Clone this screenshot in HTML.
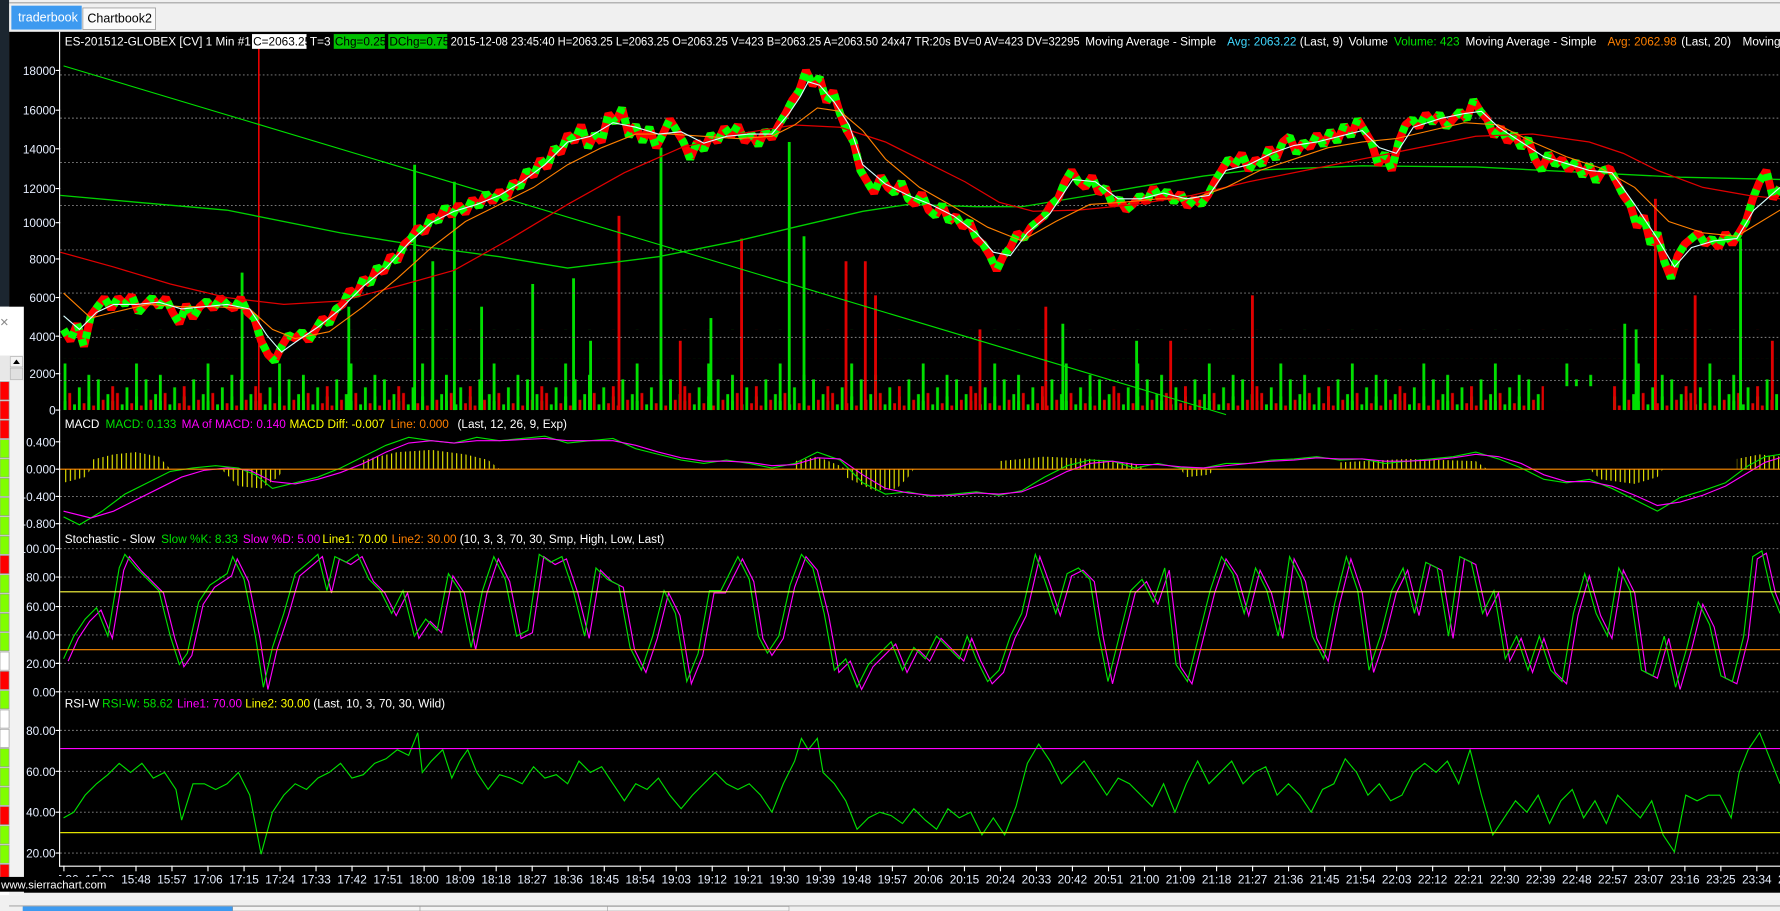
<!DOCTYPE html>
<html><head><meta charset="utf-8">
<style>
html,body{margin:0;padding:0;background:#000;overflow:hidden}
svg{display:block}
text{font-family:"Liberation Sans",sans-serif;font-size:10.4px}
.ax{fill:#e6eeff;text-anchor:end}
.tl{fill:#e6eeff;text-anchor:middle}
.w{fill:#fff}
</style></head><body>
<svg width="1780" height="911" viewBox="0 0 1568 802" preserveAspectRatio="none" xmlns="http://www.w3.org/2000/svg">
<defs>
<clipPath id="pc"><rect x="53" y="28" width="1515" height="734"/></clipPath>
<clipPath id="tc"><rect x="52" y="762" width="1516" height="24"/></clipPath>
<pattern id="vol" patternUnits="userSpaceOnUse" x="56" y="316" width="42" height="45">
<rect x="0" y="37" width="2.5" height="8" fill="#00e000"/><rect x="4.2" y="30" width="2.5" height="15" fill="#e00000"/><rect x="8.4" y="40" width="2.5" height="5" fill="#00e000"/><rect x="12.6" y="25" width="2.5" height="20" fill="#00e000"/><rect x="16.8" y="39" width="2.5" height="6" fill="#e00000"/><rect x="21" y="33" width="2.5" height="12" fill="#00e000"/><rect x="25.2" y="41" width="2.5" height="4" fill="#e00000"/><rect x="29.4" y="18" width="2.5" height="27" fill="#00e000"/><rect x="33.6" y="36" width="2.5" height="9" fill="#e00000"/><rect x="37.8" y="31" width="2.5" height="14" fill="#00e000"/>
</pattern>
<pattern id="vol2" patternUnits="userSpaceOnUse" x="77" y="290" width="63" height="71">
<rect x="0" y="40" width="2.5" height="31" fill="#00e000"/><rect x="21" y="50" width="2.5" height="21" fill="#e00000"/><rect x="42" y="30" width="2.5" height="41" fill="#00e000"/>
</pattern>
<pattern id="hist" patternUnits="userSpaceOnUse" x="0" y="0" width="4.1" height="10"><rect x="0" y="0" width="1" height="10" fill="#e8e800"/></pattern>
</defs>
<rect x="0" y="0" width="1568" height="802" fill="#f0f0f0"/>
<rect x="0" y="0" width="8" height="270" fill="#1c2630"/>
<line x1="8" y1="2.5" x2="1568" y2="2.5" stroke="#a0a0a0"/>
<rect x="10" y="5" width="62" height="21" fill="#3d9af0"/>
<text x="16" y="19" fill="#fff" style="font-size:11px">traderbook</text>
<rect x="73" y="7" width="64" height="19" fill="#fafafa" stroke="#999" stroke-width="0.7"/>
<text x="77" y="20" fill="#000" style="font-size:11px">Chartbook2</text>
<rect x="8" y="28" width="1560" height="758" fill="#000"/>
<rect x="8" y="786" width="1560" height="16" fill="#f0f0f0"/>
<line x1="8" y1="797.5" x2="1568" y2="797.5" stroke="#aaa"/>
<rect x="20" y="798" width="185" height="4" fill="#3d9af0"/>
<rect x="205" y="798" width="165" height="4" fill="#f5f5f5" stroke="#999" stroke-width="0.5"/>
<rect x="370" y="798" width="165" height="4" fill="#f5f5f5" stroke="#999" stroke-width="0.5"/>
<rect x="535" y="798" width="160" height="4" fill="#f5f5f5" stroke="#999" stroke-width="0.5"/>
<g clip-path="url(#pc)">
<rect x="56" y="316" width="1512" height="45" fill="url(#vol)"/>
<rect x="56" y="290" width="1512" height="71" fill="url(#vol2)"/>
<g fill="#00e000">
<rect x="364" y="145" width="2.5" height="216"/><rect x="399" y="160" width="2.5" height="201"/><rect x="581" y="130" width="2.5" height="231"/><rect x="694" y="125" width="2.5" height="236"/><rect x="707" y="208" width="2.5" height="153"/><rect x="1532" y="210" width="2.5" height="151"/><rect x="423" y="270" width="2.5" height="91"/><rect x="504" y="245" width="2.5" height="116"/><rect x="519" y="300" width="2.5" height="61"/><rect x="1440" y="290" width="2.5" height="71"/><rect x="306" y="270" width="2.5" height="91"/><rect x="380" y="230" width="2.5" height="131"/><rect x="625" y="280" width="2.5" height="81"/><rect x="935" y="285" width="2.5" height="76"/><rect x="1000" y="300" width="2.5" height="61"/><rect x="1430" y="285" width="2.5" height="76"/><rect x="468" y="250" width="2.5" height="111"/><rect x="212" y="240" width="2.5" height="121"/>
</g>
<g fill="#e00000">
<rect x="544" y="190" width="2.5" height="171"/><rect x="652" y="210" width="2.5" height="151"/><rect x="744" y="230" width="2.5" height="131"/><rect x="761" y="230" width="2.5" height="131"/><rect x="1102" y="260" width="2.5" height="101"/><rect x="1457" y="175" width="2.5" height="186"/><rect x="1492" y="260" width="2.5" height="101"/><rect x="862" y="290" width="2.5" height="71"/><rect x="920" y="270" width="2.5" height="91"/><rect x="1030" y="300" width="2.5" height="61"/><rect x="1560" y="300" width="2.5" height="61"/><rect x="770" y="260" width="2.5" height="101"/><rect x="598" y="300" width="2.5" height="61"/>
</g>
<rect x="1360" y="340" width="60" height="21" fill="#000"/>
</g>
<g stroke="#888" stroke-dasharray="1.5,2" stroke-width="0.8">
<line x1="53" y1="66" x2="1568" y2="66"/><line x1="53" y1="104" x2="1568" y2="104"/><line x1="53" y1="143" x2="1568" y2="143"/><line x1="53" y1="181" x2="1568" y2="181"/><line x1="53" y1="220" x2="1568" y2="220"/><line x1="53" y1="258" x2="1568" y2="258"/><line x1="53" y1="297" x2="1568" y2="297"/><line x1="53" y1="335" x2="1568" y2="335"/>
<line x1="53" y1="437" x2="1568" y2="437"/><line x1="53" y1="461" x2="1568" y2="461"/>
<line x1="53" y1="483" x2="1568" y2="483"/><line x1="53" y1="508" x2="1568" y2="508"/><line x1="53" y1="534" x2="1568" y2="534"/><line x1="53" y1="559" x2="1568" y2="559"/><line x1="53" y1="584" x2="1568" y2="584"/><line x1="53" y1="609" x2="1568" y2="609"/>
<line x1="53" y1="643" x2="1568" y2="643"/><line x1="53" y1="679" x2="1568" y2="679"/><line x1="53" y1="715" x2="1568" y2="715"/><line x1="53" y1="751" x2="1568" y2="751"/>
</g>
<g clip-path="url(#pc)">
<line x1="228" y1="42" x2="228" y2="361" stroke="#ff0000" stroke-width="1.3"/>
<polyline fill="none" stroke="#00d000" stroke-width="1.2" points="53,172 120,178 200,185 300,205 380,218 440,226 500,236 580,226 650,212 700,200 760,186 800,180 860,182 900,182 960,172 1000,165 1060,155 1100,150 1200,146 1300,147 1400,152 1480,156 1568,158"/>
<line x1="56" y1="58" x2="1080" y2="365" stroke="#00e000"/>
<g fill="none" stroke-linejoin="bevel">
<polyline stroke="#ff0000" stroke-width="7" points="56,290 62,300 68,285 74,305 80,278 86,270 92,262 98,272 104,262 110,268 116,260 122,275 128,268 134,262 140,270 146,262 152,275 158,285 164,268 170,280 176,270 182,265 188,272 194,262 200,268 206,272 212,262 218,275 224,280 230,300 236,312 242,318 248,305 254,295 260,298 266,292 272,300 278,290 284,280 290,285 296,272 302,268 308,255 314,260 320,245 326,250 332,235 338,240 344,225 350,230 356,215 362,210 368,200 374,205 380,190 386,195 392,182 398,190 404,180 410,188 416,175 422,182 428,170 434,178 440,168 446,175 452,160 458,165 464,150 470,155 476,140 482,148 488,130 494,135 500,118 506,125 512,110 518,130 524,118 530,125 536,100 542,108 548,95 554,120 560,110 566,125 572,112 578,130 584,118 590,105 596,115 602,125 608,140 614,125 620,132 626,118 632,125 638,112 644,120 650,110 656,125 662,118 668,128 674,115 680,122 686,110 692,100 698,88 704,80 710,62 716,75 722,68 728,90 734,80 740,100 746,115 752,125 758,150 764,160 770,170 776,155 782,165 788,170 794,160 800,175 806,180 812,170 818,185 824,190 830,180 836,195 842,190 848,200 854,195 860,210 866,215 872,225 878,238 884,225 890,218 896,205 902,210 908,200 914,195 920,190 926,180 932,175 938,160 944,150 950,160 956,165 962,155 968,170 974,165 980,180 986,175 992,185 998,180 1004,172 1010,178 1016,165 1022,175 1028,168 1034,178 1040,170 1046,182 1052,175 1058,180 1064,172 1070,160 1076,150 1082,140 1088,145 1094,135 1100,150 1106,140 1112,145 1118,130 1124,140 1130,125 1136,120 1142,135 1148,125 1154,130 1160,118 1166,128 1172,115 1178,125 1184,110 1190,120 1196,105 1202,115 1208,125 1214,145 1220,135 1226,150 1232,125 1238,110 1244,105 1250,112 1256,100 1262,108 1268,100 1274,112 1280,105 1286,98 1292,105 1298,88 1304,98 1310,105 1316,120 1322,112 1328,125 1334,118 1340,130 1346,122 1352,140 1358,150 1364,135 1370,145 1376,140 1382,150 1388,142 1394,155 1400,145 1406,160 1412,150 1418,148 1424,160 1430,172 1436,180 1442,200 1448,190 1454,215 1460,205 1466,230 1472,245 1478,225 1484,215 1490,210 1496,205 1502,215 1508,210 1514,218 1520,205 1526,215 1532,205 1538,195 1544,175 1550,160 1556,150 1562,175 1568,165"/>
<polyline stroke="#00ff00" stroke-width="7" stroke-dasharray="6,8" points="56,290 62,300 68,285 74,305 80,278 86,270 92,262 98,272 104,262 110,268 116,260 122,275 128,268 134,262 140,270 146,262 152,275 158,285 164,268 170,280 176,270 182,265 188,272 194,262 200,268 206,272 212,262 218,275 224,280 230,300 236,312 242,318 248,305 254,295 260,298 266,292 272,300 278,290 284,280 290,285 296,272 302,268 308,255 314,260 320,245 326,250 332,235 338,240 344,225 350,230 356,215 362,210 368,200 374,205 380,190 386,195 392,182 398,190 404,180 410,188 416,175 422,182 428,170 434,178 440,168 446,175 452,160 458,165 464,150 470,155 476,140 482,148 488,130 494,135 500,118 506,125 512,110 518,130 524,118 530,125 536,100 542,108 548,95 554,120 560,110 566,125 572,112 578,130 584,118 590,105 596,115 602,125 608,140 614,125 620,132 626,118 632,125 638,112 644,120 650,110 656,125 662,118 668,128 674,115 680,122 686,110 692,100 698,88 704,80 710,62 716,75 722,68 728,90 734,80 740,100 746,115 752,125 758,150 764,160 770,170 776,155 782,165 788,170 794,160 800,175 806,180 812,170 818,185 824,190 830,180 836,195 842,190 848,200 854,195 860,210 866,215 872,225 878,238 884,225 890,218 896,205 902,210 908,200 914,195 920,190 926,180 932,175 938,160 944,150 950,160 956,165 962,155 968,170 974,165 980,180 986,175 992,185 998,180 1004,172 1010,178 1016,165 1022,175 1028,168 1034,178 1040,170 1046,182 1052,175 1058,180 1064,172 1070,160 1076,150 1082,140 1088,145 1094,135 1100,150 1106,140 1112,145 1118,130 1124,140 1130,125 1136,120 1142,135 1148,125 1154,130 1160,118 1166,128 1172,115 1178,125 1184,110 1190,120 1196,105 1202,115 1208,125 1214,145 1220,135 1226,150 1232,125 1238,110 1244,105 1250,112 1256,100 1262,108 1268,100 1274,112 1280,105 1286,98 1292,105 1298,88 1304,98 1310,105 1316,120 1322,112 1328,125 1334,118 1340,130 1346,122 1352,140 1358,150 1364,135 1370,145 1376,140 1382,150 1388,142 1394,155 1400,145 1406,160 1412,150 1418,148 1424,160 1430,172 1436,180 1442,200 1448,190 1454,215 1460,205 1466,230 1472,245 1478,225 1484,215 1490,210 1496,205 1502,215 1508,210 1514,218 1520,205 1526,215 1532,205 1538,195 1544,175 1550,160 1556,150 1562,175 1568,165"/>
</g>
<polyline fill="none" stroke="#e00000" stroke-width="1.1" points="53,222 100,235 150,250 200,262 250,268 300,265 350,252 400,238 450,210 500,180 550,152 600,130 650,118 700,110 740,112 780,125 820,145 850,160 880,178 910,186 950,185 1000,180 1050,172 1100,160 1150,150 1200,140 1250,130 1300,120 1350,118 1400,125 1430,135 1460,150 1500,165 1540,172 1568,175"/>
<polyline fill="none" stroke="#ff8000" stroke-width="1" points="56,258 80,280 100,275 130,268 160,270 190,270 220,272 240,290 260,298 290,292 320,270 350,245 380,218 410,195 440,180 470,165 500,145 530,130 560,118 590,118 620,120 650,122 680,120 700,110 720,95 740,98 760,115 780,140 810,165 840,182 870,200 900,212 930,195 960,180 990,178 1020,175 1050,175 1080,165 1110,150 1140,140 1170,130 1200,125 1230,122 1260,115 1290,108 1320,110 1350,125 1380,138 1410,148 1440,165 1470,195 1500,205 1530,208 1568,185"/>
<polyline fill="none" stroke="#d8ffff" stroke-width="1" points="56,278 70,290 85,275 100,268 120,268 140,266 160,272 180,270 200,268 220,272 235,295 248,310 262,300 280,288 300,272 320,252 340,236 360,214 380,196 400,186 420,180 440,172 460,160 480,145 500,125 520,120 540,108 560,112 580,118 600,116 620,126 640,120 660,118 680,118 695,100 705,85 712,72 722,75 735,90 748,110 760,145 780,162 800,172 820,180 840,190 860,205 875,222 890,225 905,205 925,188 945,158 965,160 985,175 1005,175 1025,170 1045,175 1065,172 1080,150 1100,145 1120,135 1140,128 1160,125 1180,120 1200,115 1215,130 1230,135 1245,112 1270,104 1290,100 1305,98 1320,112 1340,125 1360,138 1380,144 1400,150 1420,152 1440,180 1460,210 1475,235 1490,218 1510,212 1530,210 1545,185 1568,165"/>
<path fill="url(#hist)" d="M56 413 L56 425 L75 420 L80 413 L80 405 L100 400 L120 398 L140 402 L150 413 L195 413 L210 428 L230 430 L245 420 L250 413 L320 413 L320 405 L350 398 L380 396 L410 400 L430 405 L440 413 L700 413 L700 406 L720 402 L740 410 L745 413 L745 420 L770 432 L790 430 L800 420 L805 413 L880 413 L880 406 L920 402 L960 404 L1000 408 L1010 413 L1040 413 L1045 420 L1065 418 L1070 413 L1180 413 L1180 407 L1240 404 L1300 406 L1310 413 L1400 413 L1410 422 L1440 426 L1460 420 L1465 413 L1530 413 L1530 404 L1550 400 L1568 402 L1568 413 Z"/>
<polyline fill="none" stroke="#00e000" stroke-width="1" points="56,455 70,462 90,450 110,435 130,425 150,415 170,412 190,410 210,412 225,418 240,430 260,425 280,420 300,412 320,402 340,392 360,385 380,388 400,390 420,385 440,388 460,386 480,384 500,390 520,388 540,386 560,395 580,400 600,405 620,408 640,405 660,408 680,412 700,408 720,398 740,405 760,425 780,435 800,433 820,437 840,435 860,433 880,436 900,432 920,420 940,410 960,405 980,406 1000,412 1020,408 1040,412 1060,412 1080,408 1100,408 1120,405 1140,404 1160,402 1180,405 1200,404 1220,408 1240,406 1260,404 1280,402 1300,398 1320,404 1340,412 1360,422 1380,425 1400,422 1420,430 1440,440 1460,450 1480,438 1500,432 1520,425 1540,410 1555,402 1568,400"/>
<polyline fill="none" stroke="#ff00ff" stroke-width="1" points="56,450 80,456 100,450 120,440 140,430 160,420 180,414 200,412 220,414 240,424 260,426 280,422 300,416 320,408 340,398 360,390 380,388 400,390 420,388 440,388 460,387 480,386 500,388 520,388 540,388 560,392 580,398 600,403 620,406 640,406 660,407 680,410 700,409 720,403 740,404 760,418 780,430 800,434 820,436 840,436 860,434 880,435 900,433 920,425 940,415 960,408 980,406 1000,409 1020,409 1040,411 1060,412 1080,410 1100,408 1120,406 1140,405 1160,403 1180,404 1200,404 1220,406 1240,406 1260,405 1280,403 1300,400 1320,402 1340,408 1360,418 1380,424 1400,424 1420,428 1440,436 1460,445 1480,442 1500,436 1520,428 1540,416 1555,407 1568,403"/>
<polyline fill="none" stroke="#ff00ff" stroke-width="1" transform="translate(4,2)" points="56,580 65,560 75,545 85,535 95,560 105,500 110,488 120,500 130,510 140,520 150,560 158,585 165,575 175,530 185,515 200,505 205,490 215,510 225,560 232,605 240,570 250,540 260,505 272,495 280,488 288,520 295,490 305,495 315,488 325,510 335,520 345,540 355,520 365,560 375,545 385,555 395,505 405,520 415,570 425,520 435,490 445,510 455,560 465,555 475,488 485,495 495,490 505,520 515,560 525,500 535,510 545,515 555,570 565,590 575,560 585,520 595,540 605,600 615,575 625,520 635,520 645,500 650,490 660,510 668,560 676,575 686,560 696,515 706,488 716,500 726,540 735,590 745,580 755,605 765,585 775,575 785,565 795,590 805,570 815,580 825,560 835,570 845,580 852,560 860,580 870,600 880,590 890,560 900,540 912,488 920,510 930,540 940,505 950,500 960,510 968,560 976,600 986,560 996,520 1006,510 1016,530 1026,500 1036,585 1046,600 1056,560 1066,520 1076,490 1086,505 1096,540 1106,500 1116,520 1126,560 1136,490 1146,510 1156,560 1166,580 1176,530 1186,490 1196,520 1206,590 1216,560 1226,520 1236,500 1246,540 1256,495 1266,500 1276,560 1286,490 1296,495 1306,540 1316,520 1326,580 1336,560 1346,590 1356,560 1366,590 1376,600 1386,540 1396,505 1406,540 1416,560 1426,500 1436,520 1446,590 1456,595 1466,560 1476,605 1486,570 1496,530 1506,550 1516,595 1526,600 1536,560 1544,490 1552,485 1560,520 1568,540"/>
<polyline fill="none" stroke="#00e000" stroke-width="1" points="56,580 65,560 75,545 85,535 95,560 105,500 110,488 120,500 130,510 140,520 150,560 158,585 165,575 175,530 185,515 200,505 205,490 215,510 225,560 232,605 240,570 250,540 260,505 272,495 280,488 288,520 295,490 305,495 315,488 325,510 335,520 345,540 355,520 365,560 375,545 385,555 395,505 405,520 415,570 425,520 435,490 445,510 455,560 465,555 475,488 485,495 495,490 505,520 515,560 525,500 535,510 545,515 555,570 565,590 575,560 585,520 595,540 605,600 615,575 625,520 635,520 645,500 650,490 660,510 668,560 676,575 686,560 696,515 706,488 716,500 726,540 735,590 745,580 755,605 765,585 775,575 785,565 795,590 805,570 815,580 825,560 835,570 845,580 852,560 860,580 870,600 880,590 890,560 900,540 912,488 920,510 930,540 940,505 950,500 960,510 968,560 976,600 986,560 996,520 1006,510 1016,530 1026,500 1036,585 1046,600 1056,560 1066,520 1076,490 1086,505 1096,540 1106,500 1116,520 1126,560 1136,490 1146,510 1156,560 1166,580 1176,530 1186,490 1196,520 1206,590 1216,560 1226,520 1236,500 1246,540 1256,495 1266,500 1276,560 1286,490 1296,495 1306,540 1316,520 1326,580 1336,560 1346,590 1356,560 1366,590 1376,600 1386,540 1396,505 1406,540 1416,560 1426,500 1436,520 1446,590 1456,595 1466,560 1476,605 1486,570 1496,530 1506,550 1516,595 1526,600 1536,560 1544,490 1552,485 1560,520 1568,540"/>
<polyline fill="none" stroke="#00e000" stroke-width="1" points="56,720 65,715 75,700 85,690 95,682 105,672 115,680 125,672 135,685 145,680 155,695 160,722 170,690 180,690 190,695 200,690 210,680 220,700 230,752 240,715 250,700 260,690 270,695 280,685 290,680 300,672 310,685 320,682 330,672 340,668 350,660 360,665 368,645 372,680 380,670 390,660 398,685 405,670 412,660 420,680 430,695 440,682 450,685 460,690 470,675 480,685 490,682 500,690 510,670 520,680 530,675 540,690 550,705 560,690 570,695 580,685 590,700 600,712 610,700 620,690 630,680 640,690 650,695 660,690 670,700 680,715 690,690 700,670 706,650 712,660 720,650 725,680 735,690 745,705 755,730 765,720 775,715 785,718 795,725 805,712 815,722 825,730 835,712 845,720 855,715 865,735 875,720 885,735 895,710 905,672 915,655 925,670 935,690 945,680 955,670 965,685 975,700 985,685 995,690 1005,700 1015,710 1025,690 1035,715 1045,690 1055,670 1065,690 1075,680 1085,670 1095,690 1105,680 1115,675 1125,700 1135,690 1145,700 1155,715 1165,695 1175,690 1185,668 1195,680 1205,700 1215,690 1225,705 1235,700 1245,680 1255,672 1265,680 1275,670 1285,690 1295,660 1305,700 1315,735 1325,720 1335,705 1345,715 1355,700 1365,725 1375,705 1385,695 1395,720 1405,705 1415,725 1425,700 1435,710 1445,720 1455,705 1465,735 1475,750 1485,700 1495,705 1505,700 1515,700 1525,720 1532,680 1540,660 1550,645 1560,670 1568,690"/>
</g>
<line x1="53" y1="413" x2="1568" y2="413" stroke="#ff8c00"/>
<line x1="53" y1="521" x2="1568" y2="521" stroke="#ffff40"/>
<line x1="53" y1="572" x2="1568" y2="572" stroke="#ff8c00"/>
<line x1="53" y1="659" x2="1568" y2="659" stroke="#ff00ff"/>
<line x1="53" y1="733" x2="1568" y2="733" stroke="#e0e000"/>
<line x1="52.5" y1="28" x2="52.5" y2="763" stroke="#fff"/>
<line x1="52" y1="762.5" x2="1568" y2="762.5" stroke="#fff"/>
<path stroke="#fff" fill="none" d="M56.3 762v5M88 762v5M119.8 762v5M151.5 762v5M183.2 762v5M215 762v5M246.7 762v5M278.4 762v5M310.1 762v5M341.9 762v5M373.6 762v5M405.3 762v5M437.1 762v5M468.8 762v5M500.5 762v5M532.3 762v5M564 762v5M595.7 762v5M627.4 762v5M659.2 762v5M690.9 762v5M722.6 762v5M754.4 762v5M786.1 762v5M817.8 762v5M849.6 762v5M881.3 762v5M913 762v5M944.7 762v5M976.5 762v5M1008.2 762v5M1039.9 762v5M1071.7 762v5M1103.4 762v5M1135.1 762v5M1166.9 762v5M1198.6 762v5M1230.3 762v5M1262 762v5M1293.8 762v5M1325.5 762v5M1357.2 762v5M1389 762v5M1420.7 762v5M1452.4 762v5M1484.2 762v5M1515.9 762v5M1547.6 762v5M49 62h4M49 97h4M49 131h4M49 166h4M49 196h4M49 228h4M49 262h4M49 296h4M49 329h4M49 361h4M49 389h4M49 413h4M49 437h4M49 461h4M49 483h4M49 508h4M49 534h4M49 559h4M49 584h4M49 609h4M49 643h4M49 679h4M49 715h4M49 751h4"/>
<g class="ax">
<text x="49" y="66">18000</text><text x="49" y="101">16000</text><text x="49" y="135">14000</text><text x="49" y="170">12000</text><text x="49" y="200">10000</text><text x="49" y="232">8000</text><text x="49" y="266">6000</text><text x="49" y="300">4000</text><text x="49" y="333">2000</text><text x="49" y="365">0</text>
<text x="49" y="393">0.400</text><text x="49" y="417">0.000</text><text x="49" y="441">-0.400</text><text x="49" y="465">-0.800</text>
<text x="49" y="487">100.00</text><text x="49" y="512">80.00</text><text x="49" y="538">60.00</text><text x="49" y="563">40.00</text><text x="49" y="588">20.00</text><text x="49" y="613">0.00</text>
<text x="49" y="647">80.00</text><text x="49" y="683">60.00</text><text x="49" y="719">40.00</text><text x="49" y="755">20.00</text>
</g>
<rect x="222" y="30" width="48" height="13" fill="#fff"/>
<rect x="294" y="30" width="45" height="13" fill="#00c000"/>
<rect x="342" y="30" width="52" height="13" fill="#00c000"/>
<text y="40" class="w"><tspan x="57">ES-201512-GLOBEX [CV]  1 Min   #1</tspan><tspan x="223" fill="#000">C=2063.25</tspan><tspan x="273">T=3</tspan><tspan x="295" fill="#000">Chg=0.25</tspan><tspan x="343" fill="#000">DChg=0.75</tspan></text>
<text x="397" y="40" class="w" textLength="554" lengthAdjust="spacingAndGlyphs">2015-12-08 23:45:40 H=2063.25 L=2063.25 O=2063.25 V=423 B=2063.25 A=2063.50 24x47 TR:20s BV=0 AV=423 DV=32295</text>
<text y="40" class="w"><tspan x="956">Moving Average - Simple</tspan><tspan x="1081" fill="#40d8ff">Avg: 2063.22</tspan><tspan x="1145">(Last, 9)</tspan><tspan x="1188">Volume</tspan><tspan x="1228" fill="#00e000">Volume: 423</tspan><tspan x="1291">Moving Average - Simple</tspan><tspan x="1416" fill="#ff8000">Avg: 2062.98</tspan><tspan x="1481">(Last, 20)</tspan><tspan x="1535">Moving Average</tspan></text>
<text y="377" class="w"><tspan x="57">MACD</tspan><tspan x="93" fill="#00e000">MACD: 0.133</tspan><tspan x="160" fill="#ff00ff">MA of MACD: 0.140</tspan><tspan x="255" fill="#ffff00">MACD Diff: -0.007</tspan><tspan x="344" fill="#ff8000">Line: 0.000</tspan><tspan x="403">(Last, 12, 26, 9, Exp)</tspan></text>
<text y="478" class="w"><tspan x="57">Stochastic - Slow</tspan><tspan x="142" fill="#00e000">Slow %K: 8.33</tspan><tspan x="214" fill="#ff00ff">Slow %D: 5.00</tspan><tspan x="284" fill="#ffff00">Line1: 70.00</tspan><tspan x="345" fill="#ff8000">Line2: 30.00</tspan><tspan x="405">(10, 3, 3, 70, 30, Smp, High, Low, Last)</tspan></text>
<text y="623" class="w"><tspan x="57">RSI-W</tspan><tspan x="90" fill="#00e000">RSI-W: 58.62</tspan><tspan x="156" fill="#ff00ff">Line1: 70.00</tspan><tspan x="216" fill="#ffff00">Line2: 30.00</tspan><tspan x="276">(Last, 10, 3, 70, 30, Wild)</tspan></text>
<g class="tl" clip-path="url(#tc)">
<text x="56.3" y="778">15:30</text><text x="88" y="778">15:39</text><text x="119.8" y="778">15:48</text><text x="151.5" y="778">15:57</text><text x="183.2" y="778">17:06</text><text x="215" y="778">17:15</text><text x="246.7" y="778">17:24</text><text x="278.4" y="778">17:33</text><text x="310.1" y="778">17:42</text><text x="341.9" y="778">17:51</text><text x="373.6" y="778">18:00</text><text x="405.3" y="778">18:09</text><text x="437.1" y="778">18:18</text><text x="468.8" y="778">18:27</text><text x="500.5" y="778">18:36</text><text x="532.3" y="778">18:45</text><text x="564" y="778">18:54</text><text x="595.7" y="778">19:03</text><text x="627.4" y="778">19:12</text><text x="659.2" y="778">19:21</text><text x="690.9" y="778">19:30</text><text x="722.6" y="778">19:39</text><text x="754.4" y="778">19:48</text><text x="786.1" y="778">19:57</text><text x="817.8" y="778">20:06</text><text x="849.6" y="778">20:15</text><text x="881.3" y="778">20:24</text><text x="913" y="778">20:33</text><text x="944.7" y="778">20:42</text><text x="976.5" y="778">20:51</text><text x="1008.2" y="778">21:00</text><text x="1039.9" y="778">21:09</text><text x="1071.7" y="778">21:18</text><text x="1103.4" y="778">21:27</text><text x="1135.1" y="778">21:36</text><text x="1166.9" y="778">21:45</text><text x="1198.6" y="778">21:54</text><text x="1230.3" y="778">22:03</text><text x="1262" y="778">22:12</text><text x="1293.8" y="778">22:21</text><text x="1325.5" y="778">22:30</text><text x="1357.2" y="778">22:39</text><text x="1389" y="778">22:48</text><text x="1420.7" y="778">22:57</text><text x="1452.4" y="778">23:07</text><text x="1484.2" y="778">23:16</text><text x="1515.9" y="778">23:25</text><text x="1547.6" y="778">23:34</text><text x="1579.3" y="778">23:43</text>
</g>
<rect x="0" y="270" width="21" height="518" fill="#fff"/>
<text x="0" y="288" fill="#888" style="font-size:13px">×</text>
<rect x="0" y="313" width="21" height="22" fill="#e8e8e8"/>
<rect x="9" y="314" width="11" height="9" fill="#f4f4f4" stroke="#aaa" stroke-width="0.5"/>
<path d="M11.5 320.5 L14.5 316.5 L17.5 320.5 Z" fill="#000"/>
<rect x="9" y="324" width="11" height="10" fill="#e0e0e0" stroke="#aaa" stroke-width="0.5"/>
<rect x="8" y="335" width="13" height="453" fill="#f2f2f2"/>
<g stroke="#999" stroke-width="0.6">
<rect x="0" y="336" width="8" height="16" fill="#f00"/><rect x="0" y="353" width="8" height="16" fill="#f00"/><rect x="0" y="370" width="8" height="16" fill="#f00"/><rect x="0" y="387" width="8" height="16" fill="#80ff00"/><rect x="0" y="404" width="8" height="16" fill="#80ff00"/><rect x="0" y="421" width="8" height="16" fill="#80ff00"/><rect x="0" y="438" width="8" height="16" fill="#80ff00"/><rect x="0" y="455" width="8" height="16" fill="#80ff00"/><rect x="0" y="472" width="8" height="16" fill="#80ff00"/><rect x="0" y="489" width="8" height="16" fill="#f00"/><rect x="0" y="506" width="8" height="16" fill="#80ff00"/><rect x="0" y="523" width="8" height="16" fill="#80ff00"/><rect x="0" y="540" width="8" height="16" fill="#80ff00"/><rect x="0" y="557" width="8" height="16" fill="#80ff00"/><rect x="0" y="574" width="8" height="16" fill="#fff"/><rect x="0" y="591" width="8" height="16" fill="#f00"/><rect x="0" y="608" width="8" height="16" fill="#80ff00"/><rect x="0" y="625" width="8" height="16" fill="#fff"/><rect x="0" y="642" width="8" height="16" fill="#fff"/><rect x="0" y="659" width="8" height="16" fill="#80ff00"/><rect x="0" y="676" width="8" height="16" fill="#80ff00"/><rect x="0" y="693" width="8" height="16" fill="#80ff00"/><rect x="0" y="710" width="8" height="16" fill="#f00"/><rect x="0" y="727" width="8" height="16" fill="#80ff00"/><rect x="0" y="744" width="8" height="16" fill="#80ff00"/><rect x="0" y="761" width="8" height="16" fill="#f00"/>
</g>
<rect x="0" y="772" width="101" height="13" fill="#000"/>
<text x="1" y="782" fill="#fff" style="font-size:10px">www.sierrachart.com</text>
</svg>
</body></html>
